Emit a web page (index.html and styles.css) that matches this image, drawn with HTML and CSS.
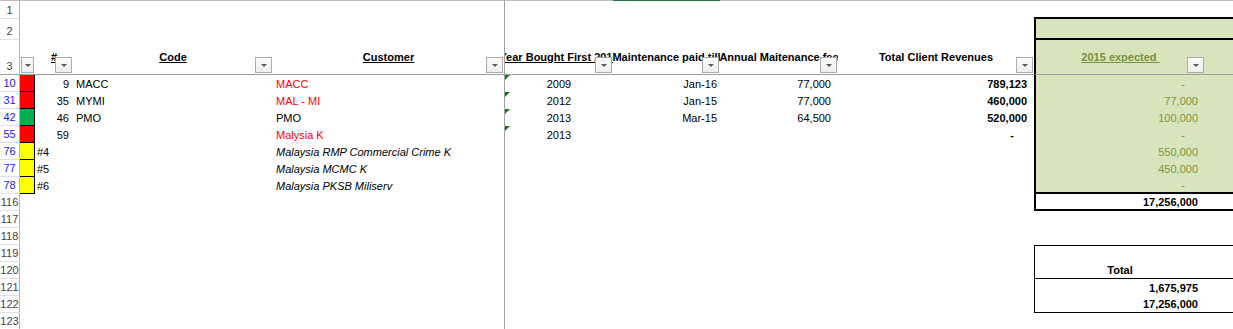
FILE: index.html
```html
<!DOCTYPE html>
<html lang="en">
<head>
    <meta charset="UTF-8">
    <meta name="viewport" content="width=device-width, initial-scale=1.0">
    <title>Client Revenues</title>
    <link rel="stylesheet" href="styles.css">
</head>
<body>
<div class="sheet">
    <!-- row 1: top edge, active column marker on F -->
    <div class="row row-1">
        <div class="rh">1</div><div></div><div></div><div></div><div></div>
        <div class="pane"></div><div class="sel"></div><div></div><div></div><div></div><div></div>
    </div>

    <div class="row row-2">
        <div class="rh">2</div><div></div><div></div><div></div><div></div>
        <div class="pane"></div><div></div><div></div><div></div>
        <div class="fill box-t box-l box-b"></div><div class="fill box-t box-b"></div>
    </div>

    <!-- header row with filter buttons -->
    <div class="row row-3">
        <div class="rh">3</div>
        <div><span class="dd dd-narrow"></span></div>
        <div><u>#</u><span class="dd"></span></div>
        <div><u>Code</u><span class="dd"></span></div>
        <div><u>Customer</u><span class="dd"></span></div>
        <div class="pane"><u>Year Bought First 2015</u><span class="dd"></span></div>
        <div>Maintenance paid till<span class="dd"></span></div>
        <div>Annual Maitenance fee<span class="dd"></span></div>
        <div>Total Client Revenues<span class="dd"></span></div>
        <div class="fill box-l head-green"><u>2015 expected&nbsp;</u><span class="dd"></span></div>
        <div class="fill"></div>
    </div>

    <div class="row">
        <div class="rh flt">10</div>
        <div class="flag flag-red"></div>
        <div class="idx">9</div>
        <div class="txt">MACC</div>
        <div class="txt red">MACC</div>
        <div class="pane ctr tri">2009</div>
        <div class="date">Jan-16</div>
        <div class="acc">77,000</div>
        <div class="acc b">789,123</div>
        <div class="fill box-l dash">-</div>
        <div class="fill"></div>
    </div>

    <div class="row">
        <div class="rh flt">31</div>
        <div class="flag flag-red"></div>
        <div class="idx">35</div>
        <div class="txt">MYMI</div>
        <div class="txt red">MAL - MI</div>
        <div class="pane ctr tri">2012</div>
        <div class="date">Jan-15</div>
        <div class="acc">77,000</div>
        <div class="acc b">460,000</div>
        <div class="fill box-l acc">77,000</div>
        <div class="fill"></div>
    </div>

    <div class="row">
        <div class="rh flt">42</div>
        <div class="flag flag-green"></div>
        <div class="idx">46</div>
        <div class="txt">PMO</div>
        <div class="txt">PMO</div>
        <div class="pane ctr tri">2013</div>
        <div class="date">Mar-15</div>
        <div class="acc">64,500</div>
        <div class="acc b">520,000</div>
        <div class="fill box-l acc">100,000</div>
        <div class="fill"></div>
    </div>

    <div class="row">
        <div class="rh flt">55</div>
        <div class="flag flag-red"></div>
        <div class="idx">59</div>
        <div></div>
        <div class="txt red">Malysia K</div>
        <div class="pane ctr tri">2013</div>
        <div></div>
        <div></div>
        <div class="dash b">-</div>
        <div class="fill box-l dash">-</div>
        <div class="fill"></div>
    </div>

    <div class="row">
        <div class="rh flt">76</div>
        <div class="flag flag-yellow"></div>
        <div class="tag">#4</div>
        <div></div>
        <div class="txt it">Malaysia RMP Commercial Crime K</div>
        <div class="pane"></div><div></div><div></div><div></div>
        <div class="fill box-l acc">550,000</div>
        <div class="fill"></div>
    </div>

    <div class="row">
        <div class="rh flt">77</div>
        <div class="flag flag-yellow"></div>
        <div class="tag">#5</div>
        <div></div>
        <div class="txt it">Malaysia MCMC K</div>
        <div class="pane"></div><div></div><div></div><div></div>
        <div class="fill box-l acc">450,000</div>
        <div class="fill"></div>
    </div>

    <div class="row">
        <div class="rh flt">78</div>
        <div class="flag flag-yellow"></div>
        <div class="tag">#6</div>
        <div></div>
        <div class="txt it">Malaysia PKSB Miliserv</div>
        <div class="pane"></div><div></div><div></div><div></div>
        <div class="fill box-l box-b dash">-</div>
        <div class="fill box-b"></div>
    </div>

    <div class="row">
        <div class="rh">116</div><div></div><div></div><div></div><div></div>
        <div class="pane"></div><div></div><div></div><div></div>
        <div class="box-l box-b acc b">17,256,000</div>
        <div class="box-b"></div>
    </div>

    <div class="row">
        <div class="rh">117</div><div></div><div></div><div></div><div></div>
        <div class="pane"></div><div></div><div></div><div></div><div></div><div></div>
    </div>

    <div class="row">
        <div class="rh">118</div><div></div><div></div><div></div><div></div>
        <div class="pane"></div><div></div><div></div><div></div><div></div><div></div>
    </div>

    <!-- totals block -->
    <div class="row">
        <div class="rh">119</div><div></div><div></div><div></div><div></div>
        <div class="pane"></div><div></div><div></div><div></div>
        <div class="line-t line-l"></div>
        <div class="line-t"></div>
    </div>

    <div class="row">
        <div class="rh">120</div><div></div><div></div><div></div><div></div>
        <div class="pane"></div><div></div><div></div><div></div>
        <div class="line-l line-b ctr b">Total</div>
        <div class="line-b"></div>
    </div>

    <div class="row">
        <div class="rh">121</div><div></div><div></div><div></div><div></div>
        <div class="pane"></div><div></div><div></div><div></div>
        <div class="line-l acc b">1,675,975</div>
        <div></div>
    </div>

    <div class="row">
        <div class="rh">122</div><div></div><div></div><div></div><div></div>
        <div class="pane"></div><div></div><div></div><div></div>
        <div class="line-l line-b acc b">17,256,000</div>
        <div class="line-b"></div>
    </div>

    <div class="row">
        <div class="rh">123</div><div></div><div></div><div></div><div></div>
        <div class="pane"></div><div></div><div></div><div></div><div></div><div></div>
    </div>
</div>
</body>
</html>
```

FILE: styles.css
```css
:root {
    --cols: 20px 15px 38px 200px 231px 109px 107px 118px 196px 171px 1fr;
    --pane: #a0a0a0;
    --fill: #d8e4bc;
    --olive: #76923c;
}

* {
    box-sizing: border-box;
}

body {
    margin: 0;
    font-family: "Liberation Sans", Arial, sans-serif;
    font-size: 11px;
    line-height: 14px;
    color: #000;
    background: #fff;
    overflow: hidden;
}

.sheet {
    display: flex;
    flex-direction: column;
}

.row {
    display: grid;
    grid-template-columns: var(--cols);
    height: 17px;
}

.row > div {
    display: flex;
    align-items: center;
    min-width: 0;
    white-space: nowrap;
    overflow: hidden;
}

.row-1 {
    height: 19px;
}

.row-1 > div {
    border-top: 1px solid #bdbdbd;
}

.row-1 > .sel {
    border-top-color: #217346;
}

.row-2 {
    height: 21px;
}

.row-3 {
    height: 35px;
}

.row-3 > div {
    position: relative;
    align-items: flex-end;
    justify-content: center;
    padding-bottom: 10px;
    font-weight: bold;
    border-bottom: 1px solid var(--pane);
}

/* row numbers */
.row > .rh {
    justify-content: center;
    align-items: flex-end;
    padding-bottom: 1px;
    font-weight: normal;
    color: #444;
    border-right: 1px solid #b4b4b4;
    border-bottom: 1px solid #e0e0e0;
}

.row-3 > .rh {
    border-bottom-color: var(--pane);
}

.row > .flt {
    color: #1c1cdc;
}

/* frozen pane divider */
.pane {
    border-left: 1px solid var(--pane);
}

/* filter buttons */
.dd {
    position: absolute;
    right: 1px;
    bottom: 1px;
    width: 17px;
    height: 16px;
    border: 1px solid #ababab;
    background: linear-gradient(#fdfdfd, #ededed);
}

.dd::after {
    content: "";
    position: absolute;
    left: 50%;
    top: 6px;
    margin-left: -3px;
    border-left: 3px solid transparent;
    border-right: 3px solid transparent;
    border-top: 3px solid #595959;
}

.dd-narrow {
    width: 13px;
}

/* status flags in column A */
.flag {
    border-right: 1px solid #000;
    border-bottom: 1px solid #000;
}

.flag-red {
    background: #ff0000;
}

.flag-green {
    background: #00b050;
}

.flag-yellow {
    background: #ffff00;
}

/* cell formats */
.row > .idx {
    justify-content: flex-end;
    padding-right: 4px;
}

.tag {
    padding-left: 2px;
}

.txt {
    padding-left: 3px;
}

.row > .ctr {
    justify-content: center;
}

.row > .date {
    justify-content: flex-end;
    padding-right: 3px;
}

.row > .acc {
    justify-content: flex-end;
    padding-right: 7px;
}

.row > .dash {
    justify-content: flex-end;
    padding-right: 20px;
}

.b {
    font-weight: bold;
}

.it {
    font-style: italic;
}

.red {
    color: #ff0000;
}

/* number stored as text marker */
.tri {
    position: relative;
}

.tri::before {
    content: "";
    position: absolute;
    left: 0;
    top: 0;
    border-top: 5px solid #107c10;
    border-right: 5px solid transparent;
}

/* expected column block */
.fill {
    background: var(--fill);
    color: #7a9640;
}

.row-3 > .head-green {
    color: var(--olive);
}

.box-t {
    border-top: 2px solid #000;
    margin-top: -2px;
}

.box-l {
    border-left: 2px solid #000;
}

.box-b {
    border-bottom: 2px solid #000;
}

.line-t {
    border-top: 1px solid #000;
}

.line-l {
    border-left: 1px solid #000;
}

.line-b {
    border-bottom: 1px solid #000;
}
```
